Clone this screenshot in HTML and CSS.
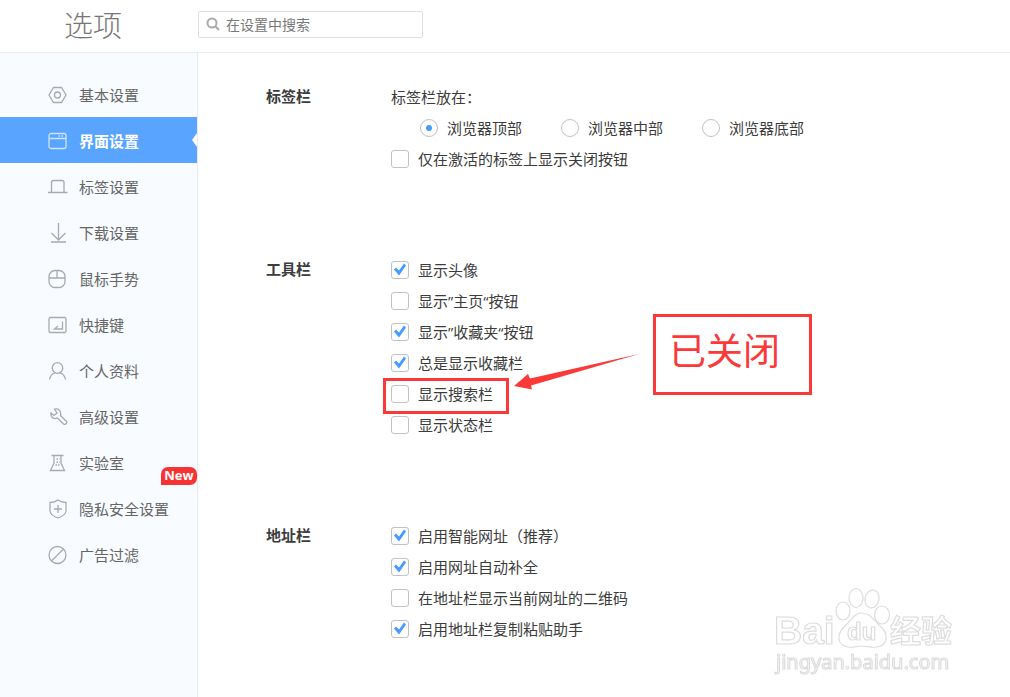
FILE: index.html
```html
<!DOCTYPE html>
<html lang="zh-CN">
  <head>
    <meta charset="utf-8">
    <title>选项</title>
    <link rel="stylesheet" href="styles.css">
  </head>
  <body>
    <header class="header">
      <h1 class="title">选项</h1>
      <label class="search">
        <svg class="search-icon" width="14" height="14" viewBox="0 0 14 14">
          <circle cx="6" cy="6" r="4.500"/>
          <path d="M9.500 9.500L13 13"/>
        </svg>
        <input class="search-input" type="text" placeholder="在设置中搜索" aria-label="在设置中搜索">
      </label>
    </header>
    <div class="container">
      <nav class="sidebar">
        <a class="nav-item" href="#basic">
          <svg class="icon" viewBox="0 0 20 20"><path d="M5.500 2.500h8L18 10l-4.500 7.500h-8L1 10z"/><circle cx="9.500" cy="10" r="3"/></svg>
          基本设置
        </a>
        <a class="nav-item active" href="#ui">
          <svg class="icon" viewBox="0 0 20 20"><rect x="1" y="2.500" width="17" height="15" rx="2"/><path d="M1 7.500h17M10.500 5H12M13.500 5H15"/></svg>
          界面设置
        </a>
        <a class="nav-item" href="#tabs">
          <svg class="icon" viewBox="0 0 20 20"><path d="M0 15.500h19.500M3.500 15.500V5.500q0-2 2-2h8.500q2 0 2 2v10"/></svg>
          标签设置
        </a>
        <a class="nav-item" href="#download">
          <svg class="icon" viewBox="0 0 20 20"><path d="M10.500 0v17M3.500 10l7 7 7-7M3 19h15"/></svg>
          下载设置
        </a>
        <a class="nav-item" href="#mouse">
          <svg class="icon" viewBox="0 0 20 20"><rect x="1" y="1.500" width="16" height="17" rx="6"/><path d="M1 9h16M9 1.500V9"/></svg>
          鼠标手势
        </a>
        <a class="nav-item" href="#keys">
          <svg class="icon" viewBox="0 0 20 20"><rect x="1" y="2.500" width="17" height="15" rx="1.500"/><path d="M14.500 6.500v7.500h-8l3.500-3"/></svg>
          快捷键
        </a>
        <a class="nav-item" href="#profile">
          <svg class="icon" viewBox="0 0 20 20"><circle cx="9.500" cy="7" r="5.300"/><path d="M1.500 18.500q1-5.500 5.500-6.700M17.500 18.500q-1-5.500-5.500-6.700"/></svg>
          个人资料
        </a>
        <a class="nav-item" href="#advanced">
          <svg class="icon" viewBox="0 0 20 20"><path d="M6.500 2.200Q10 1 12 4q1.200 2.500.5 4.500l6 6q.8 1-.5 2.200t-2.500.3L9.500 11Q6 12.500 3.800 10 2.500 8 3 6l3 2.500L9 6z"/></svg>
          高级设置
        </a>
        <a class="nav-item" href="#lab">
          <svg class="icon" viewBox="0 0 20 20"><path d="M3.500 2.500h12M6 2.500v7.500L2.500 17.500h14L13 10V2.500"/><path d="M8.500 6h3M8.500 9h3M7.500 12h4" stroke-dasharray="1.500 1"/></svg>
          实验室
          <span class="badge">New</span>
        </a>
        <a class="nav-item" href="#privacy">
          <svg class="icon" viewBox="0 0 20 20"><path d="M10 1q3.500 2.500 8 2.500v8.500q-.5 4.500-8 7-7.500-2.500-8-7V3.500q4.500 0 8-2.500zM6 10h8M10 6v8"/></svg>
          隐私安全设置
        </a>
        <a class="nav-item" href="#adblock">
          <svg class="icon" viewBox="0 0 20 20"><circle cx="9.500" cy="10" r="8.500"/><path d="M3.500 16l12-12"/></svg>
          广告过滤
        </a>
      </nav>
      <main class="content">
        <section class="group">
          <h2 class="group-title">标签栏</h2>
          <div class="options">
            <div class="row">标签栏放在：</div>
            <div class="row radios">
              <label class="option"><input type="radio" name="tab-position" checked>浏览器顶部</label>
              <label class="option"><input type="radio" name="tab-position">浏览器中部</label>
              <label class="option"><input type="radio" name="tab-position">浏览器底部</label>
            </div>
            <div class="row"><label class="option"><input type="checkbox">仅在激活的标签上显示关闭按钮</label></div>
          </div>
        </section>
        <section class="group">
          <h2 class="group-title">工具栏</h2>
          <div class="options">
            <div class="row"><label class="option"><input type="checkbox" checked>显示头像</label></div>
            <div class="row"><label class="option"><input type="checkbox">显示”主页“按钮</label></div>
            <div class="row"><label class="option"><input type="checkbox" checked>显示”收藏夹“按钮</label></div>
            <div class="row"><label class="option"><input type="checkbox" checked>总是显示收藏栏</label></div>
            <div class="row">
              <label class="option marked"><input type="checkbox">显示搜索栏</label>
            </div>
            <div class="row"><label class="option"><input type="checkbox">显示状态栏</label></div>
            <svg class="arrow" width="126" height="38" viewBox="0 0 126 38">
              <path d="M0 32L14 20l2 4.500L125 0 17 31.500l1 4z"/>
            </svg>
            <div class="callout">已关闭</div>
          </div>
        </section>
        <section class="group">
          <h2 class="group-title">地址栏</h2>
          <div class="options">
            <div class="row"><label class="option"><input type="checkbox" checked>启用智能网址（推荐）</label></div>
            <div class="row"><label class="option"><input type="checkbox" checked>启用网址自动补全</label></div>
            <div class="row"><label class="option"><input type="checkbox">在地址栏显示当前网址的二维码</label></div>
            <div class="row"><label class="option"><input type="checkbox" checked>启用地址栏复制粘贴助手</label></div>
          </div>
        </section>
      </main>
    </div>
    <svg class="watermark" width="190" height="94" viewBox="0 0 190 94">
      <text class="wm-brand" x="-1" y="56">Bai</text>
      <ellipse cx="68" cy="23" rx="7" ry="9"/>
      <ellipse cx="81" cy="10" rx="7" ry="9.500"/>
      <ellipse cx="97" cy="11" rx="7" ry="9" transform="rotate(12 97 11)"/>
      <ellipse cx="107" cy="27" rx="7.500" ry="9"/>
      <path d="M87 25c9 0 12 8 18 13 10 8 7 20-3 21-6 1-10-1-15-1s-9 2-14 1c-11-2-12-13-3-21 6-5 9-13 17-13z"/>
      <text class="wm-du" x="72" y="52">du</text>
      <text class="wm-cn" x="115" y="54">经验</text>
      <text class="wm-url" x="1" y="81">jingyan.baidu.com</text>
    </svg>
  </body>
</html>
```
FILE: styles.css
```css
* {
  box-sizing: border-box;
}

body {
  display: flex;
  flex-direction: column;
  min-height: 100vh;
  margin: 0;
  background: #fff;
  color: #3c3c3c;
  font-family: "Open Sans", "Noto Sans CJK SC", sans-serif;
  font-size: 15px;
  line-height: 20px;
}

.header {
  display: flex;
  align-items: center;
  height: 53px;
  padding: 0 0 4px 64px;
  border-bottom: 1px solid #ebebeb;
}

.title {
  width: 134px;
  margin: 0;
  padding-top: 4px;
  color: #777;
  font-size: 29px;
  font-weight: 300;
  line-height: 40px;
}

.search {
  display: flex;
  align-items: center;
  width: 225px;
  height: 27px;
  padding: 0 7px;
  border: 1px solid #dfdfdf;
  border-radius: 2px;
}

.search-icon {
  flex: none;
  fill: none;
  stroke: #aaa;
  stroke-width: 2;
}

.search-input {
  flex: 1;
  min-width: 0;
  margin-left: 6px;
  padding: 2px 0 0;
  border: 0;
  outline: 0;
  font: inherit;
  font-size: 14px;
}

.search-input::placeholder {
  color: #777;
}

.container {
  display: flex;
  flex: 1;
}

.sidebar {
  flex: none;
  width: 198px;
  padding-top: 18px;
  background: #f8fbff;
  border-right: 1px solid #e6e8ec;
}

.nav-item {
  position: relative;
  display: flex;
  align-items: center;
  height: 46px;
  padding: 1px 0 0 48px;
  color: #666;
  text-decoration: none;
}

.nav-item.active {
  background: #58a4ff;
  color: #fff;
  font-weight: bold;
}

.nav-item.active::after {
  content: "";
  position: absolute;
  top: 16px;
  right: 0;
  border: solid transparent;
  border-width: 7px 5px 7px 0;
  border-right-color: #fff;
}

.icon {
  width: 20px;
  height: 20px;
  margin-right: 11px;
  fill: none;
  stroke: #aaa;
  stroke-width: 1.3;
}

.active .icon {
  stroke: #cfe4ff;
}

.badge {
  position: absolute;
  right: 0;
  bottom: 0;
  width: 36px;
  height: 18px;
  border-radius: 7px 7px 7px 0;
  background: #f53333;
  color: #fff;
  font-family: "Open Sans", sans-serif;
  font-size: 13px;
  font-weight: bold;
  line-height: 16px;
  text-align: center;
}

.content {
  flex: 1;
  padding: 28px 0 0 68px;
}

.group {
  display: flex;
  margin-bottom: 80px;
}

.group:last-child {
  margin-bottom: 0;
}

.group-title {
  flex: none;
  width: 125px;
  margin: 0;
  font-size: 15px;
  font-weight: bold;
  line-height: 31px;
}

.options {
  position: relative;
  flex: 1;
}

.row {
  display: flex;
  align-items: center;
  height: 31px;
}

.radios {
  gap: 39px;
  padding-left: 29px;
}

.option {
  position: relative;
  display: flex;
  align-items: center;
}

.option input {
  position: relative;
  flex: none;
  appearance: none;
  width: 18px;
  height: 18px;
  margin: 0 9px 0 0;
  border: 1px solid #c2c2c2;
  border-radius: 3px;
  background: #fff;
}

.option input[type="radio"] {
  border-radius: 50%;
}

.option input:checked::before {
  content: "";
  position: absolute;
  inset: 0;
  background: #469bff;
  clip-path: polygon(2px 8px, 4px 6px, 7px 9px, 12px 2px, 14px 4px, 7px 14px);
}

.option input[type="radio"]:checked::before {
  inset: 5px;
  border-radius: 50%;
  clip-path: none;
}

/* red annotations over the toolbar options */
.marked::after {
  content: "";
  position: absolute;
  inset: -6px -16px -10px -8px;
  border: 3px solid #fb3939;
}

.arrow {
  position: absolute;
  top: 100px;
  left: 123px;
  fill: #fb3939;
}

.callout {
  position: absolute;
  top: 60px;
  left: 262px;
  width: 159px;
  height: 81px;
  padding-left: 13px;
  border: 3px solid #fb3939;
  color: #fb3939;
  font-size: 37px;
  line-height: 68px;
}

.watermark {
  position: fixed;
  right: 45px;
  bottom: 15px;
  overflow: visible;
  fill: #fff;
  stroke: #ddd;
  stroke-width: 1.2;
  pointer-events: none;
}

.wm-brand {
  font: bold 39px "Liberation Sans", sans-serif;
}

.wm-du {
  font: bold 24px "Liberation Sans", sans-serif;
}

.wm-cn {
  font: bold 31px "Noto Sans CJK SC", sans-serif;
}

.wm-url {
  font: 20px "Noto Sans", sans-serif;
}
```
